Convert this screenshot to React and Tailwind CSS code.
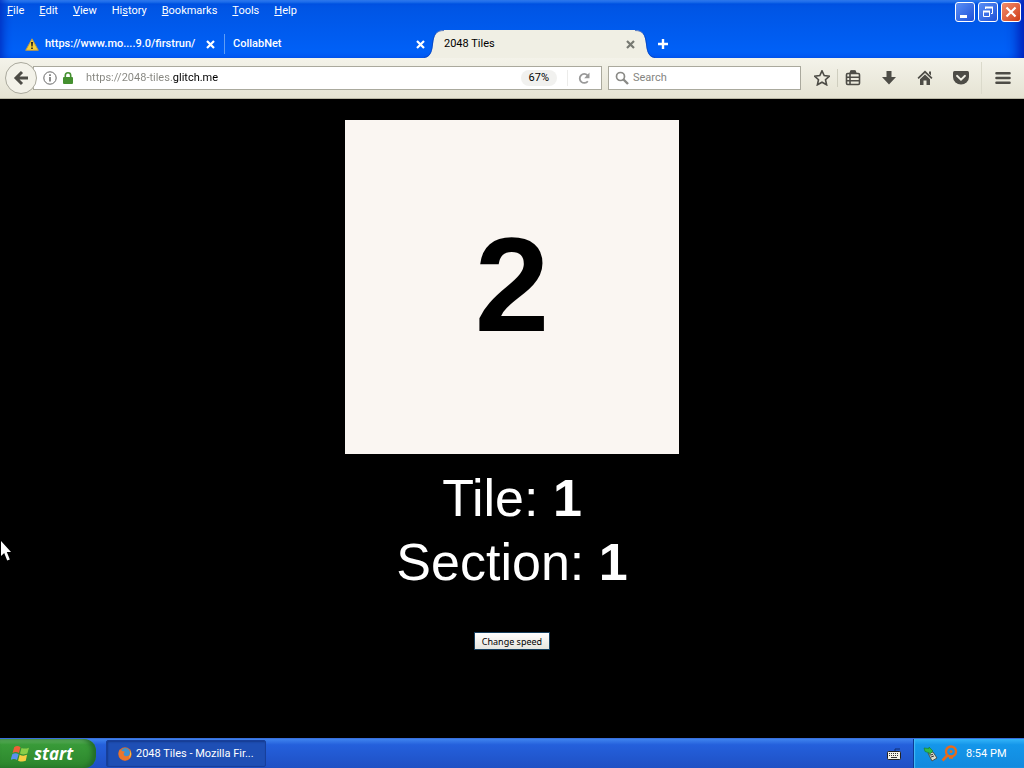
import React from "react";

const menus = ["File", "Edit", "View", "History", "Bookmarks", "Tools", "Help"];
const accessIndex = [0, 0, 0, 2, 0, 0, 0];

function CloseMark() {
  return (
    <svg width="9" height="9" viewBox="0 0 9 9" aria-hidden="true">
      <path d="M1 1 8 8M8 1 1 8" stroke="currentColor" strokeWidth="2.2" />
    </svg>
  );
}

function MenuBar() {
  return (
    <nav className="flex h-[22px] items-center gap-[15px] pl-[7px]">
      {menus.map((name, i) => (
        <button key={name}>
          {name.slice(0, accessIndex[i])}
          <span className="underline">{name[accessIndex[i]]}</span>
          {name.slice(accessIndex[i] + 1)}
        </button>
      ))}
    </nav>
  );
}

function WindowButtons() {
  const base = "flex size-5 items-center justify-center rounded-[3px] border border-white text-white";
  return (
    <div className="flex gap-[3px] pt-[2px] pr-[3px]">
      <button aria-label="Minimize" className={base + " bg-linear-to-br from-[#5b8ef5] to-[#1f50d8]"}>
        <svg width="18" height="18" viewBox="0 0 18 18"><path d="M4 12h7v3H4z" fill="#fff" /></svg>
      </button>
      <button aria-label="Restore" className={base + " bg-linear-to-br from-[#5b8ef5] to-[#1f50d8]"}>
        <svg width="18" height="18" viewBox="0 0 18 18" fill="none" stroke="#fff">
          <path d="M6.5 6V4.5h7v6H12" /><path d="M6 4.5h8" strokeWidth="2" />
          <path d="M4.5 8.5h6v5h-6z" /><path d="M4 8.5h7" strokeWidth="2" />
        </svg>
      </button>
      <button aria-label="Close" className={base + " bg-linear-to-br from-[#f08c6c] to-[#cf3a10]"}>
        <svg width="18" height="18" viewBox="0 0 18 18"><path d="m4.500 4.500 9 9m0-9-9 9" stroke="#fff" strokeWidth="2.200" /></svg>
      </button>
    </div>
  );
}

function TabStrip() {
  return (
    <div className="flex h-7 items-stretch pl-4" role="tablist">
      <div className="flex w-[208px] items-center pr-[9px] pl-[9px]">
        <svg className="mr-1.5 shrink-0" width="14" height="13" viewBox="0 0 14 13">
          <path d="M7 .8 13.300 12.300H.7z" fill="#f5cf38" stroke="#b9984a" strokeLinejoin="round" />
          <path d="M6 4h2l-.4 4.500H6.400zM6.200 9.500h1.600V11H6.200z" fill="#222" />
        </svg>
        <button role="tab" aria-selected="false" className="flex-1 truncate text-left font-medium">https://www.mo....9.0/firstrun/</button>
        <button aria-label="Close tab"><CloseMark /></button>
      </div>
      <div className="my-1 w-px bg-[#5f9df5]" />
      <div className="flex w-[200px] items-center pl-2">
        <button role="tab" aria-selected="false" className="flex-1 text-left font-medium">CollabNet</button>
        <button aria-label="Close tab"><CloseMark /></button>
      </div>
      <svg className="-ml-px shrink-0" width="20" height="28" viewBox="0 0 20 28">
        <path d="M0 28C7 27 8 21 9 14 10 5 12 0 20 0V28z" fill="#f0efe4" />
        <path d="M0 27.500C7 26.500 8 20 8.500 14 9.500 5 12 .5 20 .5" fill="none" stroke="#0b3eae" strokeOpacity=".65" />
      </svg>
      <div className="flex w-[191px] items-center bg-[#f0efe4] text-black">
        <button role="tab" aria-selected="true" className="flex-1 text-left">2048 Tiles</button>
        <button aria-label="Close tab" className="text-[#777972]"><CloseMark /></button>
      </div>
      <svg className="shrink-0" width="20" height="28" viewBox="0 0 20 28">
        <path d="M20 28C13 27 12 21 11 14 10 5 8 0 0 0V28z" fill="#f0efe4" />
        <path d="M20 27.500C13 26.500 12 20 11.500 14 10.500 5 8 .5 0 .5" fill="none" stroke="#0b3eae" strokeOpacity=".65" />
      </svg>
      <button aria-label="New tab" className="ml-0.5">
        <svg width="12" height="12" viewBox="0 0 12 12"><path d="M6 1v10M1 6h10" stroke="#fff" strokeWidth="2.400" /></svg>
      </button>
    </div>
  );
}

function Toolbar() {
  return (
    <div className="flex h-[41px] items-center border-b border-[#b9b7a6] bg-linear-to-b from-[#f4f3ea] to-[#e5e3d3] pr-[13px] pl-[5px] text-[#4d4c46]">
      <button aria-label="Back" className="z-10 flex size-8 shrink-0 items-center justify-center rounded-full border border-[#aaa99d] bg-[#f3f2e9]">
        <svg width="16" height="16" viewBox="0 0 16 16" fill="none" stroke="currentColor" strokeWidth="3">
          <path d="M9 2 3 8l6 6M3.500 8H15" />
        </svg>
      </button>
      <div className="-ml-1 flex h-6 min-w-0 flex-1 items-center border border-[#aaa99d] bg-white pr-2.5 pl-[9px]">
        <button aria-label="Site information">
          <svg width="14" height="14" viewBox="0 0 14 14" fill="none" stroke="#666">
            <circle cx="7" cy="7" r="6.200" /><path d="M7 6v4.500M7 3.300v1.600" strokeWidth="1.500" />
          </svg>
        </button>
        <svg className="ml-1.5 shrink-0" width="10" height="12" viewBox="0 0 10 12">
          <path d="M2.300 6V3.500a2.700 2.700 0 0 1 5.400 0V6" fill="none" stroke="#459030" strokeWidth="1.600" />
          <rect y="5" width="10" height="7" rx="1" fill="#459030" />
        </svg>
        <input aria-label="Address" defaultValue="https://2048-tiles.glitch.me" className="ml-[13px] min-w-0 flex-1 bg-linear-to-r from-[#85857f] from-[87px] to-black to-[87px] bg-clip-text text-transparent outline-none" />
        <button className="rounded-full bg-[#f1f1ef] px-2 text-[11px] leading-4 text-black">67%</button>
        <div className="mx-2.5 h-4 w-px bg-[#ececea]" />
        <button aria-label="Reload">
          <svg width="13" height="13" viewBox="0 0 13 13"><path d="M9.800 9.200A4.500 4.500 0 1 1 9.500 3.300" fill="none" stroke="#999" strokeWidth="1.800" /><path d="M11.500.5v5.800H6.200z" fill="#999" /></svg>
        </button>
      </div>
      <label className="ml-1.5 flex h-6 w-[193px] items-center border border-[#aaa99d] bg-white pl-1.5">
        <svg className="mr-1 shrink-0" width="14" height="14" viewBox="0 0 14 14" fill="none" stroke="#8a8a86">
          <circle cx="5.500" cy="5.500" r="4" strokeWidth="1.700" /><path d="m8.500 8.500 4.500 4.500" strokeWidth="2.400" />
        </svg>
        <input aria-label="Search" placeholder="Search" className="min-w-0 flex-1 outline-none placeholder:text-[#85857f]" />
      </label>
      <button aria-label="Bookmark" className="ml-[13px]">
        <svg width="16" height="16" viewBox="0 0 16 16"><path d="m8 .8 2.200 4.800 5.200.6-3.900 3.500 1.100 5.100L8 12.200l-4.600 2.600 1.100-5.100L.6 6.200l5.200-.6z" fill="none" stroke="currentColor" strokeWidth="1.600" /></svg>
      </button>
      <div className="ml-[7px] h-[18px] w-px bg-[#cfcebf]" />
      <button aria-label="Bookmarks list" className="ml-[7px]">
        <svg width="16" height="16" viewBox="0 0 16 16" fill="none" stroke="currentColor" strokeWidth="1.600">
          <rect x="1.500" y="3.500" width="13" height="11" rx="1.200" /><path d="M5 3.500 6 1h4l1 2.500M1.500 7.200h13M1.500 10.800h13M5 4v10.500" /><path d="M6 1h4v2.500H6z" fill="currentColor" strokeWidth="1" />
        </svg>
      </button>
      <button aria-label="Downloads" className="ml-5">
        <svg width="16" height="16" viewBox="0 0 16 16"><path d="M5.500 1h5v6H15l-7 7.500L1 7h4.500z" fill="currentColor" /></svg>
      </button>
      <button aria-label="Home" className="ml-5">
        <svg width="16" height="16" viewBox="0 0 16 16" fill="currentColor"><path d="m8 .5 7.500 7.300-1.200 1.200L8 3 1.700 9 .5 7.800zM12 1.500h2v4l-2-2z" /><path d="m8 4.500 5 4.800V15H9.500v-4.500h-3V15H3V9.300z" /></svg>
      </button>
      <button aria-label="Pocket" className="ml-5">
        <svg width="16" height="16" viewBox="0 0 16 16"><path d="M1.500 1h13q1.500 0 1.500 1.500V7A8 7.600 0 0 1 0 7V2.500Q0 1 1.500 1z" fill="currentColor" /><path d="m4 5.800 4 3.800 4-3.800" fill="none" stroke="#f0efe4" strokeWidth="1.900" strokeLinecap="round" /></svg>
      </button>
      <div className="ml-3 h-8 w-px bg-[#dbdacb]" />
      <button aria-label="Open menu" className="ml-[13px]">
        <svg width="16" height="16" viewBox="0 0 16 16"><path d="M1.500 3.200h13M1.500 8h13M1.500 12.800h13" stroke="currentColor" strokeWidth="2.600" strokeLinecap="round" /></svg>
      </button>
    </div>
  );
}

function Taskbar() {
  return (
    <footer className="flex h-[30px] shrink-0 items-stretch border-t border-[#3a70dc] bg-linear-to-b from-[#3f83ee] via-[#2460dc] via-20% to-[#1f50c4] text-white">
      <button className="flex w-24 items-center gap-1 rounded-r-xl bg-linear-to-b from-[#66b866] via-[#389a38] via-20% to-[#2c852c] pl-[11px] font-['Open_Sans','Noto_Sans',sans-serif] text-[17px] font-bold italic shadow-[inset_-4px_0_5px_#236b28]">
        <svg width="19" height="18" viewBox="0 0 18 17">
          <path d="M3 2q3-2 6 0L7.500 7.500q-3-2-6 0z" fill="#ee6038" />
          <path d="M10 2.700q3 1.500 7-.2l-1.500 5.600q-3.500 1.600-7-.1z" fill="#8ace48" />
          <path d="M1.200 8.700q3-2 6 0l-1.500 5.500q-3-2-6 0z" fill="#5a91ef" />
          <path d="M8.200 9.200q3.500 1.700 7 .1L14 15q-3.500 1.500-7.300-.2z" fill="#f7cd42" />
        </svg>
        start
      </button>
      <button className="my-px ml-2.5 flex w-40 items-center gap-1 rounded-[2px] border border-[#173f9b] bg-[#1e4fb5] pl-[11px] shadow-[inset_1px_1px_2px_#153a8c]">
        <svg width="14" height="14" viewBox="0 0 14 14">
          <circle cx="7" cy="7" r="6.700" fill="#e36a24" />
          <circle cx="7.300" cy="5.700" r="4.700" fill="#3d91cf" />
          <path d="M1 3.500Q3 2.500 4 4l3 .7-1.500 2Q6 9.700 9 9.300q4-.5 3-6.300 3 6-1.500 9.300Q6 15 2 11 0 8 1 3.500z" fill="#e9762d" />
          <path d="M12 3q2.500 4.500-1 8.500Q13 6 12 3z" fill="#f8d24c" />
        </svg>
        2048 Tiles - Mozilla Fir...
      </button>
      <div className="flex-1" />
      <button aria-label="Keyboard layout" className="mr-3">
        <svg width="14" height="12" viewBox="0 0 14 12"><path d="M8 4V1h5" fill="none" stroke="#102c70" /><rect x=".5" y="3.500" width="13" height="8" rx="1" fill="#f4f2e8" stroke="#222" /><path d="M2 5.500h10M2 7.500h10" stroke="#333" strokeDasharray="1 1" /><path d="M4 9.500h6" stroke="#333" /></svg>
      </button>
      <div className="flex w-[111px] items-center border-l border-[#0c3a94] bg-linear-to-b from-[#32b4f8] via-[#1496ea] via-20% to-[#128ade] pl-[9px] shadow-[inset_1px_0_1px_#45bdf8]">
        <svg width="16" height="16" viewBox="0 0 16 16">
          <path d="m5 7 5-1 4 6-5 3z" fill="#dcdccb" stroke="#46524f" /><path d="m7 9 3-.5M8 11l3-1" stroke="#333" />
          <path d="m1 2 5 .5V1l4 4-3.500 3.500V7L2 5.500z" fill="#32bb45" stroke="#157a30" strokeWidth=".6" />
        </svg>
        <svg className="ml-0.5" width="17" height="17" viewBox="0 0 17 17" fill="none" stroke="#e96a19">
          <circle cx="10" cy="6.500" r="5" strokeWidth="2.400" /><path d="M6.300 10.500 1.500 15.500M8 12.500h4" strokeWidth="2.600" /><circle cx="10" cy="6.500" r="1.500" fill="#e96a19" stroke="none" />
        </svg>
        <time className="ml-2">8:54 PM</time>
      </div>
    </footer>
  );
}

export default function App() {
  return (
    <div className="relative flex min-h-screen flex-col bg-black font-['Roboto','Noto_Sans',sans-serif] text-[11px] leading-4">
      <header>
        <div className="bg-linear-to-b from-[#3c94fc] via-[#0054e3] via-[4px] to-[#0062fa] text-white shadow-[inset_8px_0_8px_-5px_#002fc0,inset_-12px_0_12px_-6px_#001fb8]">
          <div className="flex h-[30px] items-start justify-between">
            <MenuBar />
            <WindowButtons />
          </div>
          <TabStrip />
        </div>
        <Toolbar />
      </header>
      <main className="flex flex-1 flex-col items-center pt-[21px] font-['Liberation_Sans',Arial,sans-serif] text-white">
        <div className="flex size-[334px] items-center justify-center bg-[#faf6f2] pb-1 text-[134px] leading-none font-bold text-black">2</div>
        <p className="mt-3 text-[52px] leading-[64px]">Tile: <b>1</b></p>
        <p className="text-[52px] leading-[64px]">Section: <b>1</b></p>
        <button className="mt-[38px] h-[18px] w-[76px] border border-[#17405f] bg-linear-to-b from-white to-[#e6e5df] font-['Noto_Sans',sans-serif] text-[9px] leading-none text-black">Change speed</button>
      </main>
      <Taskbar />
      <svg className="pointer-events-none absolute top-[541px] left-0" width="12" height="21" viewBox="0 0 12 21" aria-hidden="true">
        <path d="M1 0v15l3.200-3 3 7.500 2.600-1L6.800 11H11z" fill="#fff" />
      </svg>
    </div>
  );
}
